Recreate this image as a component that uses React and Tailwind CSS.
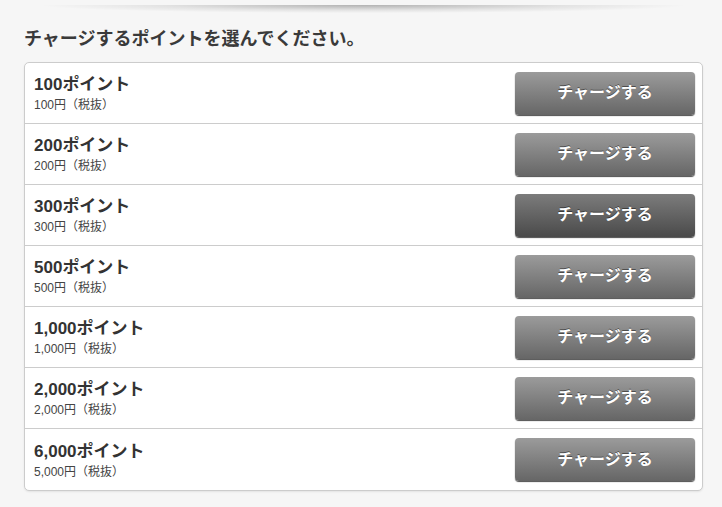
import React from 'react';

const PLANS = [
  { points: '100', price: '100' },
  { points: '200', price: '200' },
  { points: '300', price: '300', active: true },
  { points: '500', price: '500' },
  { points: '1,000', price: '1,000' },
  { points: '2,000', price: '2,000' },
  { points: '6,000', price: '5,000' },
];

function ChargeButton({ active }) {
  const bg = active
    ? 'bg-[linear-gradient(#7c7c7c,#4a4a4a)]'
    : 'bg-[linear-gradient(#9b9b9b,#666666)]';
  return (
    <button
      type="button"
      className={`${bg} h-[43px] w-[180px] rounded-[4px] text-[16px] font-bold text-white shadow-[0_1px_1px_rgba(0,0,0,0.7)] [text-shadow:0_-1px_0_rgba(0,0,0,0.45)]`}
    >
      チャージする
    </button>
  );
}

export default function App() {
  return (
    <div
      className="min-h-[507px] bg-[#f6f6f6] pl-6 pr-[19px] text-[#333]"
      style={{ fontFamily: '"Liberation Sans", "Noto Sans CJK JP", sans-serif' }}
    >
      <div className="pt-[5px]">
        <div className="mx-[20px] h-[8px] bg-[radial-gradient(ellipse_at_top,rgba(0,0,0,0.28),rgba(0,0,0,0.08)_45%,transparent_72%)]" />
      </div>

      <h2 className="mt-[14px] text-[18px] font-bold leading-[24px] text-[#3a3a3a]">
        チャージするポイントを選んでください。
      </h2>

      <div className="mt-[11px] divide-y divide-[#cccccc] overflow-hidden rounded-[5px] border border-[#cccccc] bg-white shadow-[0_1px_2px_rgba(0,0,0,0.08)]">
        {PLANS.map((p) => (
          <div key={p.points} className="flex h-[61px] items-center justify-between pl-[9px] pr-[7px]">
            <div className="flex flex-col pt-[2px]">
              <span className="text-[17px] font-bold leading-[20px] text-[#333]">{p.points}ポイント</span>
              <span className="mt-[2px] text-[12px] leading-[16px] text-[#444]">{p.price}円（税抜）</span>
            </div>
            <ChargeButton active={p.active} />
          </div>
        ))}
      </div>
    </div>
  );
}
